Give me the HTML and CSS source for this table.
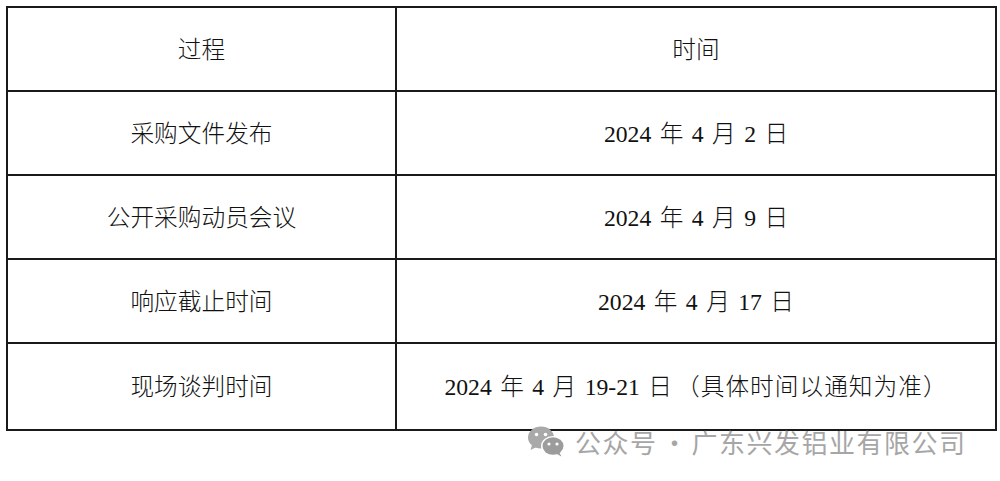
FILE: index.html
```html
<!DOCTYPE html>
<html lang="zh">
<head>
<meta charset="utf-8">
<link rel="stylesheet" href="styles.css">
</head>
<body>
<div class="page">
  <table class="schedule">
    <colgroup><col class="c1"><col class="c2"></colgroup>
    <tr class="row"><td>过程</td><td>时间</td></tr>
    <tr class="row"><td>采购文件发布</td><td class="date">2024 年 4 月 2 日</td></tr>
    <tr class="row"><td>公开采购动员会议</td><td class="date">2024 年 4 月 9 日</td></tr>
    <tr class="row"><td>响应截止时间</td><td class="date">2024 年 4 月 17 日</td></tr>
    <tr class="row last"><td>现场谈判时间</td><td class="date">2024 年 4 月 19-21 日<span class="note">（具体时间以通知为准）</span></td></tr>
  </table>
  <div class="watermark">
    <svg class="wx" width="40" height="32" viewBox="0 0 40 32">
      <ellipse cx="14" cy="11.5" rx="13" ry="11" fill="#a9a9a9"/>
      <path d="M5 19 L3.5 24 L9.5 21 Z" fill="#a9a9a9"/>
      <circle cx="9.5" cy="8.5" r="1.8" fill="#fff"/>
      <circle cx="18.5" cy="8.5" r="1.8" fill="#fff"/>
      <ellipse cx="26" cy="20" rx="12" ry="10" fill="#fff"/>
      <ellipse cx="26" cy="20" rx="10.5" ry="8.8" fill="#9c9c9c"/>
      <path d="M32 26 L34.5 30.5 L29 27.5 Z" fill="#9c9c9c"/>
      <circle cx="22" cy="18" r="1.6" fill="#fff"/>
      <circle cx="30" cy="18" r="1.6" fill="#fff"/>
    </svg>
    <span class="wm-text">公众号<span class="dot">·</span>广东兴发铝业有限公司</span>
  </div>
</div>
</body>
</html>
```

FILE: styles.css
```css
html, body {
  margin: 0;
  padding: 0;
  background: #fff;
}
.page {
  position: relative;
  width: 1000px;
  height: 481px;
  padding: 6px 0 0 6px;
  box-sizing: border-box;
}
.schedule {
  border-collapse: collapse;
  table-layout: fixed;
  width: 989px;
  font-family: "Liberation Serif", "Noto Sans CJK SC", serif;
  font-size: 23.7px;
  font-weight: 300;
  color: #111;
}
.c1 { width: 389px; }
.c2 { width: 600px; }
.schedule td {
  border: 2px solid #1a1a1a;
  text-align: center;
  vertical-align: middle;
  padding: 0 0 3px 0;
}
.schedule td.date {
  word-spacing: 2.5px;
}
.note {
  letter-spacing: 1px;
  margin-left: 4px;
}
.row { height: 84px; }
.row.last { height: 87px; }
.watermark {
  position: absolute;
  left: 527px;
  top: 424px;
  display: flex;
  align-items: center;
  gap: 8px;
}
.wx { display: block; }
.wm-text {
  font-family: "Noto Sans CJK SC", sans-serif;
  font-size: 26px;
  letter-spacing: 1.5px;
  color: #a6a6a6;
  line-height: 36px;
}
.dot {
  display: inline-block;
  width: 34px;
  text-align: center;
  letter-spacing: 0;
}
```
